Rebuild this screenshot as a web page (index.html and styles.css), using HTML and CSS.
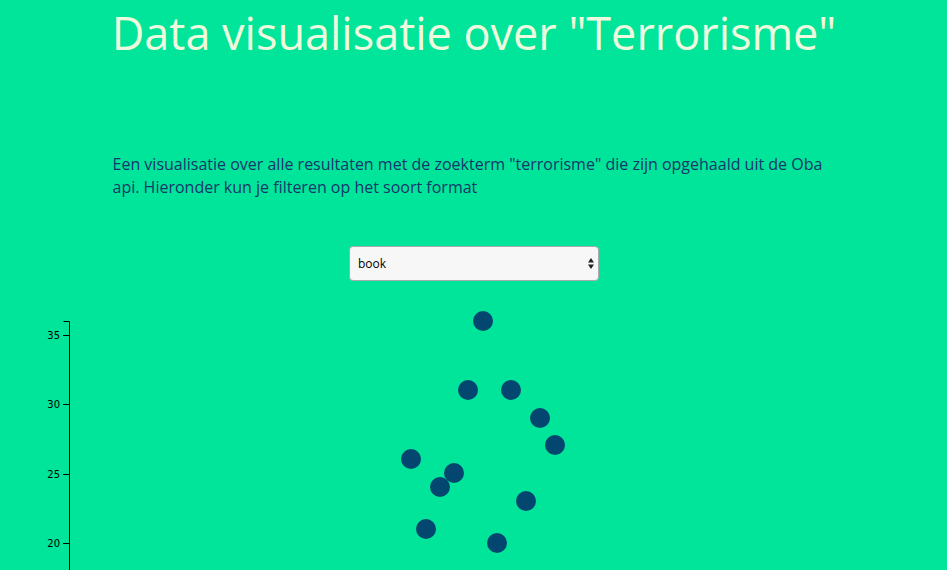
FILE: index.html
```html
<!DOCTYPE html>
<html lang="nl">
<head>
<meta charset="utf-8">
<title>Data visualisatie over "Terrorisme"</title>
<link rel="stylesheet" href="styles.css">
</head>
<body>
<header class="page">
  <h1 class="title">Data visualisatie over "Terrorisme"</h1>
  <p class="intro">Een visualisatie over alle resultaten met de zoekterm "terrorisme" die zijn opgehaald uit de Oba api. Hieronder kun je filteren op het soort format</p>
  <div class="filter">
    <select class="format-select">
      <option>book</option>
      <option>ebook</option>
      <option>dvd</option>
    </select>
  </div>
</header>
<svg class="chart" width="947" height="270" viewBox="0 300 947 270">
  <g class="axis">
    <path d="M63.5 321.5H69.5V580" fill="none" stroke="#000" stroke-width="1"/>
    <line x1="63" y1="335.5" x2="69" y2="335.5" stroke="#000"/>
    <line x1="63" y1="404.5" x2="69" y2="404.5" stroke="#000"/>
    <line x1="63" y1="474.5" x2="69" y2="474.5" stroke="#000"/>
    <line x1="63" y1="543.5" x2="69" y2="543.5" stroke="#000"/>
    <text x="60" y="339" text-anchor="end">35</text>
    <text x="60" y="408" text-anchor="end">30</text>
    <text x="60" y="478" text-anchor="end">25</text>
    <text x="60" y="547" text-anchor="end">20</text>
  </g>
  <g class="dots">
    <circle cx="483" cy="321" r="10"/>
    <circle cx="468" cy="390" r="10"/>
    <circle cx="511" cy="390" r="10"/>
    <circle cx="540" cy="418" r="10"/>
    <circle cx="555" cy="445" r="10"/>
    <circle cx="411" cy="459" r="10"/>
    <circle cx="454" cy="473" r="10"/>
    <circle cx="440" cy="487" r="10"/>
    <circle cx="526" cy="501" r="10"/>
    <circle cx="426" cy="529" r="10"/>
    <circle cx="497" cy="543" r="10"/>
  </g>
</svg>
</body>
</html>
```
FILE: styles.css
```css
html, body {
  margin: 0;
  padding: 0;
  background: #00e599;
  overflow: hidden;
}
body {
  font-family: "Open Sans", "Liberation Sans", sans-serif;
  color: #17366b;
}
.page {
  width: 723px;
  margin: 0 auto;
  padding-left: 1px;
}
.title {
  margin: 0 -40px;
  padding-top: 3px;
  font-size: 45px;
  font-weight: 500;
  line-height: 60px;
  text-align: center;
  white-space: nowrap;
  color: #eefadd;
}
.intro {
  margin: 90px 0 0;
  font-size: 16px;
  line-height: 23px;
}
.filter {
  display: flex;
  justify-content: center;
  margin-top: 47px;
}
.format-select {
  -webkit-appearance: none;
  appearance: none;
  width: 250px;
  height: 35px;
  padding: 0 8px;
  border: 1px solid #aaa;
  border-radius: 4px;
  background-color: #f7f7f7;
  background-image: url("data:image/svg+xml,%3Csvg xmlns='http://www.w3.org/2000/svg' width='6' height='11'%3E%3Cpath d='M3 0L6 4.5H0Z M3 11L6 6.5H0Z' fill='%23222'/%3E%3C/svg%3E");
  background-repeat: no-repeat;
  background-position: right 4px center;
  font-family: "Open Sans", "Liberation Sans", sans-serif;
  font-size: 12px;
  color: #000;
}
.chart {
  display: block;
  margin-top: 19px;
}
.axis text {
  font-family: "DejaVu Sans", sans-serif;
  font-size: 10px;
  fill: #000;
}
.dots circle {
  fill: #03466f;
}
```
